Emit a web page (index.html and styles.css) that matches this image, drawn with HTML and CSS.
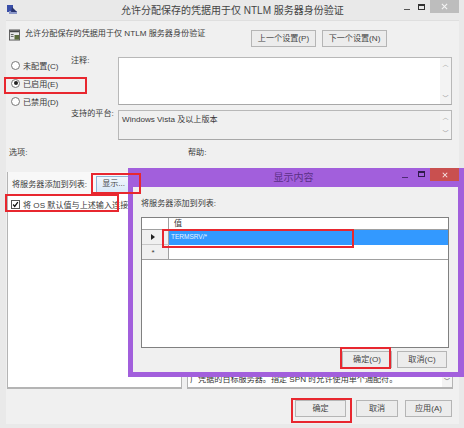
FILE: index.html
```html
<!DOCTYPE html>
<html lang="zh-CN">
<head>
<meta charset="utf-8">
<title>允许分配保存的凭据用于仅 NTLM 服务器身份验证</title>
<link rel="stylesheet" href="styles.css">
</head>
<body>
<div class="window">
  <header class="titlebar">
    <svg class="app-icon" viewBox="0 0 12 12"><rect x="1" y="1" width="6" height="7" fill="#3a4fa8"/><rect x="3" y="7" width="8" height="3" fill="#8a97c8"/><path d="M6 3l5 5H5z" fill="#27336f"/></svg>
    <div class="title">允许分配保存的凭据用于仅 NTLM 服务器身份验证</div>
    <div class="controls">
      <span class="ctl-min"></span><span class="ctl-max"></span>
      <span class="ctl-close"><svg viewBox="0 0 8 8"><path d="M1 1l6 6M7 1l-6 6" stroke="#f4f4f4" stroke-width="1.3"/></svg></span>
    </div>
  </header>
  <main class="client">
    <div class="heading">
      <svg class="policy-icon" viewBox="0 0 12 12"><rect x="0.5" y="0.5" width="11" height="11" fill="#e8e8e8" stroke="#555"/><rect x="1" y="1" width="10" height="2" fill="#444"/><rect x="2" y="5" width="3" height="1" fill="#555"/><rect x="2" y="7" width="3" height="1" fill="#555"/><rect x="6" y="6" width="5" height="5" fill="#5a6a3a"/></svg>
      <span>允许分配保存的凭据用于仅 NTLM 服务器身份验证</span>
    </div>
    <div class="nav-buttons">
      <button class="btn nav-btn">上一个设置(P)</button>
      <button class="btn nav-btn">下一个设置(N)</button>
    </div>
    <div class="state-grid">
      <div class="radios">
        <label class="radio"><i class="dot"></i>未配置(C)</label>
        <label class="radio"><i class="dot on"></i>已启用(E)</label>
        <label class="radio"><i class="dot"></i>已禁用(D)</label>
      </div>
      <div class="fields">
        <div class="field comment">
          <span class="field-label">注释:</span>
          <div class="box"><div class="box-text"></div><div class="scroll"><b>︿</b><b>﹀</b></div></div>
        </div>
        <div class="field platform">
          <span class="field-label">支持的平台:</span>
          <div class="box"><div class="box-text">Windows Vista 及以上版本</div><div class="scroll"><b>︿</b><b>﹀</b></div></div>
        </div>
      </div>
    </div>
    <div class="section-labels"><span class="opt-label">选项:</span><span>帮助:</span></div>
    <div class="panes">
      <section class="pane options">
        <div class="opt-row"><span>将服务器添加到列表:</span><button class="btn show-btn">显示...</button></div>
        <label class="check-row"><i class="check"><svg viewBox="0 0 9 9"><path d="M1.5 4.5l2 2.5 4-5.5" fill="none" stroke="#111" stroke-width="1.6"/></svg></i>将 OS 默认值与上述输入连接起来</label>
      </section>
      <section class="pane help">
        <div class="help-text">广凭据的目标服务器。指定 SPN 时允许使用单个通配符。</div>
        <div class="help-scroll">﹀</div>
      </section>
    </div>
    <footer class="footer">
      <button class="btn foot-btn">确定</button>
      <button class="btn foot-btn cancel">取消</button>
      <button class="btn foot-btn apply">应用(A)</button>
    </footer>
  </main>

  <div class="dialog">
    <div class="dlg-title">
      <span class="dlg-name">显示内容</span>
      <div class="dlg-controls">
        <span class="ctl-min dark"></span><span class="ctl-max dark"></span>
        <span class="dlg-close"><svg viewBox="0 0 8 8"><path d="M1 1l6 6M7 1l-6 6" stroke="#f6e6e6" stroke-width="1.4"/></svg></span>
      </div>
    </div>
    <div class="dlg-body">
      <div class="dlg-label">将服务器添加到列表:</div>
      <div class="table">
        <div class="tr head"><div class="th-side"></div><div class="th">值</div></div>
        <div class="tr sel"><div class="side"><svg viewBox="0 0 4 6"><path d="M0 0l4 3-4 3z" fill="#222"/></svg></div><div class="cell">TERMSRV/*</div></div>
        <div class="tr new"><div class="side">*</div><div class="cell"></div></div>
      </div>
      <div class="dlg-buttons">
        <button class="btn dlg-btn">确定(O)</button>
        <button class="btn dlg-btn">取消(C)</button>
      </div>
    </div>
  </div>

  <span class="mark m-enabled"></span>
  <span class="mark m-show"></span>
  <span class="mark m-check"></span>
  <span class="mark m-row"></span>
  <span class="mark m-dlgok"></span>
  <span class="mark m-ok"></span>
</div>
</body>
</html>
```
FILE: styles.css
```css
* { box-sizing: border-box; }
html, body { margin: 0; padding: 0; }
body {
  width: 464px; height: 428px; overflow: hidden;
  font-family: "Liberation Sans", "Noto Sans CJK SC", sans-serif;
  font-size: 8.1px; color: #3a3a3a; background: #e9e9e9;
}
.window { position: relative; width: 464px; height: 428px; padding: 0 5px 4px 6px; display: flex; flex-direction: column; }
.titlebar { height: 20px; margin: 0 -5px 0 -6px; display: flex; align-items: center; position: relative; flex: none; }
.app-icon { width: 12px; height: 12px; margin-left: 6px; }
.title { position: absolute; left: 121px; top: 3px; font-size: 10px; line-height: 15px; color: #444; white-space: nowrap; }
.controls { position: absolute; right: 5px; top: 0; display: flex; align-items: flex-start; }
.ctl-min { width: 6px; height: 1px; background: #555; margin: 9px 8px 0 0; }
.ctl-max { width: 7px; height: 6px; border: 1px solid #333; border-top-width: 2px; margin: 4px 5px 0 0; }
.ctl-close { width: 29px; height: 13px; background: #bdbdbd; display: flex; align-items: center; justify-content: center; }
.ctl-close svg { width: 7px; height: 7px; }
.client { flex: 1; background: #f0f0f0; border-top: 1px solid #dfdfdf; display: flex; flex-direction: column; min-height: 0; }
.heading { height: 0; display: flex; align-items: flex-start; gap: 5px; padding: 6px 0 0 3px; white-space: nowrap; line-height: 14px; overflow: visible; }
.policy-icon { width: 11px; height: 12px; margin-top: 2px; flex: none; }
.nav-buttons { display: flex; gap: 6px; justify-content: flex-start; margin: 3px 0 0 245px; }
.btn { font: inherit; color: #444; background: #ececec; border: 1px solid #b5b5b5; padding: 0; height: 17px; line-height: 14px; }
.nav-btn { width: 65px; }
.state-grid { display: flex; margin-top: 10px; }
.radios { width: 65px; padding: 2px 0 0 5px; display: flex; flex-direction: column; gap: 6px; }
.radio { display: flex; align-items: center; gap: 3px; height: 12px; white-space: nowrap; }
.dot { width: 9px; height: 9px; border-radius: 50%; border: 1px solid #777; background: #fff; flex: none; position: relative; }
.dot.on::after { content: ""; position: absolute; left: 1.5px; top: 1.5px; width: 4px; height: 4px; border-radius: 50%; background: #222; }
.fields { width: 381px; display: flex; flex-direction: column; gap: 5px; }
.field { display: flex; }
.field-label { width: 47px; flex: none; white-space: nowrap; line-height: 14px; margin-top: -3px; }
.comment { height: 48px; }
.platform { height: 30px; }
.box { flex: 1; display: flex; border: 1px solid #b8b8b8; border-bottom-color: #a8a8a8; background: #fff; }
.platform .box { background: #f0f0f0; }
.box-text { flex: 1; padding: 2px 3px; line-height: 14px; }
.scroll { width: 11px; display: flex; flex-direction: column; justify-content: space-between; align-items: center; background: #f3f3f3; color: #999; font-size: 6px; line-height: 8px; padding: 2px 0; }
.scroll b { font-weight: normal; }
.section-labels { display: flex; margin-top: 6px; height: 26px; padding-left: 3px; line-height: 13px; flex: none; }
.opt-label { width: 179px; }
.panes { display: flex; gap: 5px; height: 217px; margin-left: 1px; flex: none; }
.pane { border: 1px solid #b4b4b4; border-bottom-width: 2px; border-top: none; background: #fff; }
.options { width: 175px; }
.opt-row { display: flex; align-items: center; height: 22px; padding-left: 4px; gap: 9px; white-space: nowrap; background: #f8f8f8; }
.show-btn { width: 35px; height: 17px; margin-top: 2px; flex: none; background: linear-gradient(#f2f7fc, #d9e9f8); border-color: #8fb5d8; }
.check-row { display: flex; align-items: center; gap: 3px; height: 20px; padding-left: 3px; white-space: nowrap; overflow: hidden; }
.check { width: 9px; height: 9px; border: 1px solid #555; background: #fff; flex: none; display: block; }
.check svg { display: block; width: 100%; height: 100%; }
.help { width: 266px; position: relative; display: flex; align-items: flex-end; }
.help-text { flex: 1; padding: 0 0 1px 2px; line-height: 12px; white-space: nowrap; overflow: hidden; color: #333; }
.help-scroll { width: 10px; flex: none; color: #555; font-size: 6px; line-height: 12px; text-align: center; background: #f3f3f3; }
.footer { display: flex; gap: 10px; padding: 11px 0 0 289px; }
.foot-btn { width: 51px; }
.cancel { width: 42px; }
.apply { width: 47px; margin-left: -3px; }

.dialog { position: absolute; left: 128px; top: 168px; width: 336px; height: 209px; background: #a25fdc; padding: 0 6px 5px 5px; display: flex; flex-direction: column; }
.dlg-title { height: 19px; position: relative; text-align: center; line-height: 19px; font-size: 10px; color: #5a2f86; flex: none; }
.dlg-name { position: relative; left: -2px; }
.dlg-controls { position: absolute; right: -1px; top: 0; display: flex; align-items: flex-start; }
.ctl-min.dark { margin: 9px 10px 0 0; background: #4e2a74; }
.ctl-max.dark { margin: 3px 5px 0 0; border-color: #2e1a4a; }
.dlg-close { width: 29px; height: 13px; background: #c9504f; display: flex; align-items: center; justify-content: center; }
.dlg-close svg { width: 6px; height: 6px; }
.dlg-body { flex: 1; background: #f0f0f0; display: flex; flex-direction: column; padding: 10px 8px 0; }
.dlg-label { line-height: 14px; height: 20px; }
.table { height: 131px; width: 308px; background: #fff; border: 1px solid #808080; flex: none; }
.tr { display: flex; }
.head { height: 12px; border-bottom: 1px solid #a0a0a0; }
.th-side { width: 27px; border-right: 1px solid #a0a0a0; }
.th { padding-left: 5px; line-height: 12px; }
.sel { height: 15px; }
.new { height: 15px; border-bottom: 1px solid #a0a0a0; }
.side { width: 27px; background: #f0f0f0; border-right: 1px solid #a0a0a0; display: flex; align-items: center; justify-content: center; padding-right: 4px; }
.side svg { width: 4px; height: 6px; }
.sel .side { border-bottom: 1px solid #c8c8c8; }
.cell { flex: 1; padding: 1px 2px; line-height: 11px; }
.sel .cell { background: #3399ff; color: #e8f4ff; font-size: 6.5px; }
.dlg-buttons { display: flex; justify-content: flex-start; gap: 5px; padding: 3px 0 0 201px; }
.dlg-btn { width: 50px; }

.mark { position: absolute; border: 2px solid #e8272f; pointer-events: none; }
.m-enabled { left: 4px; top: 77px; width: 83px; height: 17px; }
.m-show { left: 91px; top: 173px; width: 50px; height: 21px; }
.m-check { left: 5px; top: 194px; width: 114px; height: 18px; }
.m-row { left: 162px; top: 229px; width: 192px; height: 19px; }
.m-dlgok { left: 340px; top: 347px; width: 51px; height: 22px; }
.m-ok { left: 291px; top: 398px; width: 61px; height: 25px; }
```
